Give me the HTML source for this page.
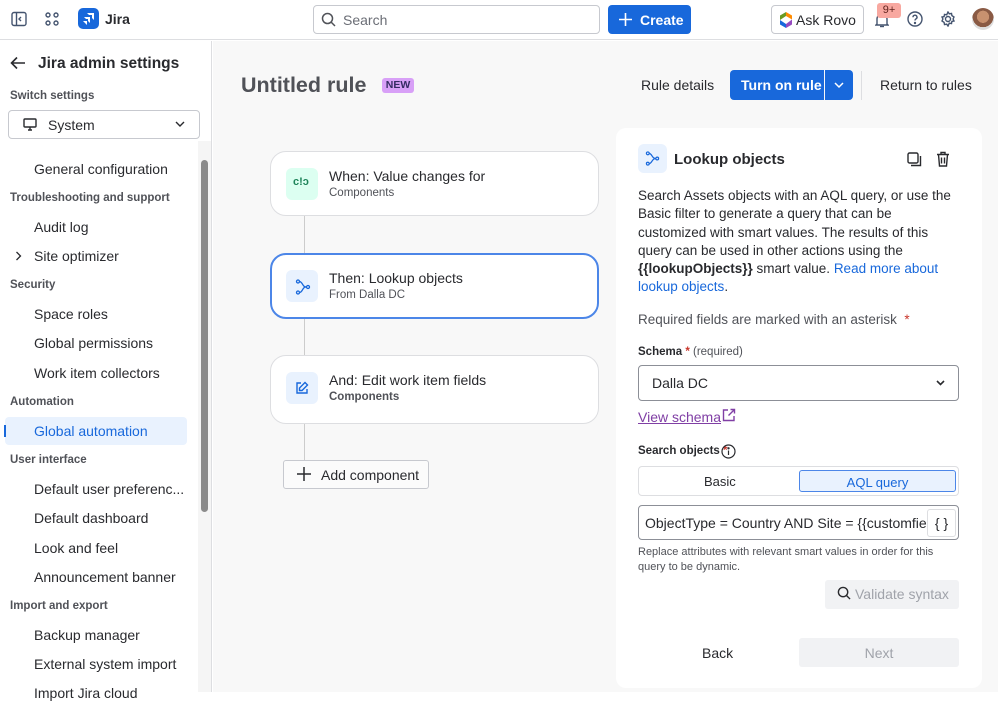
<!DOCTYPE html>
<html><head><meta charset="utf-8"><style>
*{box-sizing:border-box;margin:0;padding:0}
body{width:998px;height:692px;overflow:hidden;font-family:"Liberation Sans",sans-serif;color:#292a2e;background:#fff;position:relative;font-size:14px}
.a{position:absolute}
.top{left:0;top:0;width:998px;height:40px;border-bottom:1px solid #dddee1;background:#fff}
.side{left:0;top:41px;width:212px;height:651px;border-right:1px solid #dddee1;background:#fff}
.main{left:213px;top:41px;width:785px;height:651px;background:#f8f8f8;overflow:hidden}
.sec{font-size:11.5px;font-weight:bold;color:#505258;left:10px}
.it{font-size:14px;color:#292a2e;left:34px}
.card{background:#fff;border:1px solid #dddee1;border-radius:16px}
.ic{width:32px;height:32px;border-radius:6px;left:15px;top:16px}
.t1{left:58px;top:16px;font-size:14px}
.t2{left:58px;top:35px;font-size:11.5px;color:#505258}
</style></head><body>
<div class="a top">
 <svg class="a" style="left:11px;top:11px" width="16" height="16" viewBox="0 0 16 16" fill="none" stroke="#44546f" stroke-width="1.4"><rect x="1" y="1.5" width="14" height="13" rx="2"/><line x1="5.5" y1="1.5" x2="5.5" y2="14.5"/><path d="M10 6l-2 2 2 2"/></svg>
 <svg class="a" style="left:45px;top:12px" width="14" height="14" viewBox="0 0 14 14" fill="none" stroke="#44546f" stroke-width="1.4"><circle cx="3" cy="3" r="2"/><circle cx="11" cy="3" r="2"/><circle cx="3" cy="11" r="2"/><circle cx="11" cy="11" r="2"/></svg>
 <div class="a" style="left:78px;top:8px;width:21px;height:21px;border-radius:5px;background:#1868db"></div>
 <svg class="a" style="left:81px;top:11px" width="15" height="15" viewBox="0 0 15 15" fill="#fff"><path d="M6 2h7v7l-2-2V4H8z"/><path d="M3 6h6v6l-2-2V8H5z"/><path d="M2 10h4v4z"/></svg>
 <div class="a" style="left:105px;top:11px;font-size:14px;font-weight:bold">Jira</div>
 <div class="a" style="left:313px;top:5px;width:287px;height:29px;border:1px solid #c7c9cf;border-radius:4px"></div>
 <svg class="a" style="left:321px;top:12px" width="15" height="15" viewBox="0 0 15 15" fill="none" stroke="#505258" stroke-width="1.5"><circle cx="6.5" cy="6.5" r="5"/><line x1="10" y1="10" x2="14" y2="14"/></svg>
 <div class="a" style="left:343px;top:12px;font-size:14px;color:#6b6e76">Search</div>
 <div class="a" style="left:608px;top:5px;width:83px;height:29px;background:#1868db;border-radius:4px"></div>
 <svg class="a" style="left:619px;top:13px" width="13" height="13" viewBox="0 0 13 13" stroke="#fff" stroke-width="1.6"><path d="M6.5 0v13M0 6.5h13"/></svg>
 <div class="a" style="left:640px;top:12px;color:#fff;font-size:14px;font-weight:bold">Create</div>
 <div class="a" style="left:771px;top:5px;width:93px;height:29px;border:1px solid #c7c9cf;border-radius:4px;font-size:14px;padding:6px 0 0 24px">Ask Rovo</div>
 <svg class="a" style="left:779px;top:12px" width="14" height="16" viewBox="0 0 14 16"><path d="M7 0l6 3.5v4L7 4z" fill="#ff8b00"/><path d="M1 3.5L7 0v4L1 8z" fill="#6a9a23"/><path d="M1 8v4.5L7 16v-4z" fill="#1868db"/><path d="M13 7.5v5L7 16v-4z" fill="#964ac0"/></svg>
 <svg class="a" style="left:875px;top:12px" width="14" height="16" viewBox="0 0 14 16" fill="none" stroke="#44546f" stroke-width="1.4"><path d="M2 12V7a5 5 0 0110 0v5l1 1H1z"/><path d="M5 14.5h4"/></svg>
 <div class="a" style="left:877px;top:3px;width:24px;height:15px;background:#f8a8a0;border-radius:3px;font-size:11px;text-align:center;padding-top:1px;color:#5d1f1a">9+</div>
 <svg class="a" style="left:907px;top:11px" width="16" height="16" viewBox="0 0 16 16" fill="none" stroke="#44546f" stroke-width="1.4"><circle cx="8" cy="8" r="7"/><path d="M6 6.2a2 2 0 113 1.7c-.7.4-1 .8-1 1.6"/><circle cx="8" cy="12" r=".5" fill="#44546f"/></svg>
 <svg class="a" style="left:940px;top:11px" width="16" height="16" viewBox="0 0 16 16" fill="none" stroke="#44546f" stroke-width="1.4"><circle cx="8" cy="8" r="2.5"/><path d="M8 1l1.3 1.8 2.2-.4.4 2.2L14 6l-.9 2 .9 2-2.1.4-.4 2.2-2.2-.4L8 15l-1.3-1.8-2.2.4-.4-2.2L2 10l.9-2L2 6l2.1-.4.4-2.2 2.2.4z"/></svg>
 <div class="a" style="left:972px;top:8px;width:22px;height:22px;border-radius:50%;background:radial-gradient(circle at 50% 40%,#c8916f 0 35%,#8a5a44 36% 60%,#ddd 61%)"></div>
</div>

<div class="a side">
 <svg class="a" style="left:10px;top:15px" width="16" height="14" viewBox="0 0 16 14" fill="none" stroke="#292a2e" stroke-width="1.6"><path d="M15 7H2M7 1.5L1.5 7 7 12.5"/></svg>
 <div class="a" style="left:38px;top:14px;font-size:15.5px;font-weight:bold">Jira admin settings</div>
 <div class="a sec" style="top:49px">Switch settings</div>
 <div class="a" style="left:8px;top:69px;width:192px;height:29px;border:1px solid #c7c9cf;border-radius:4px"></div>
 <svg class="a" style="left:23px;top:77px" width="14" height="13" viewBox="0 0 14 13" fill="none" stroke="#292a2e" stroke-width="1.4"><rect x="1" y="1" width="12" height="8" rx="1"/><path d="M5 12h4M7 9v3"/></svg>
 <div class="a" style="left:48px;top:76px;font-size:14px">System</div>
 <svg class="a" style="left:175px;top:80px" width="10" height="7" viewBox="0 0 10 7" fill="none" stroke="#292a2e" stroke-width="1.4"><path d="M1 1l4 4 4-4"/></svg>
 <div class="a it" style="top:120px">General configuration</div>
 <div class="a sec" style="top:151px">Troubleshooting and support</div>
 <div class="a it" style="top:178px">Audit log</div>
 <svg class="a" style="left:15px;top:210px" width="7" height="10" viewBox="0 0 7 10" fill="none" stroke="#292a2e" stroke-width="1.3"><path d="M1.5 1l4 4-4 4"/></svg>
 <div class="a it" style="top:207px">Site optimizer</div>
 <div class="a sec" style="top:238px">Security</div>
 <div class="a it" style="top:265px">Space roles</div>
 <div class="a it" style="top:294px">Global permissions</div>
 <div class="a it" style="top:324px">Work item collectors</div>
 <div class="a sec" style="top:355px">Automation</div>
 <div class="a" style="left:5px;top:376px;width:182px;height:28px;background:#e9f2fe;border-radius:4px"></div>
 <div class="a" style="left:4px;top:384px;width:2px;height:12px;background:#1868db"></div>
 <div class="a it" style="top:382px;color:#1868db">Global automation</div>
 <div class="a sec" style="top:413px">User interface</div>
 <div class="a it" style="top:440px">Default user preferenc...</div>
 <div class="a it" style="top:469px">Default dashboard</div>
 <div class="a it" style="top:499px">Look and feel</div>
 <div class="a it" style="top:528px">Announcement banner</div>
 <div class="a sec" style="top:559px">Import and export</div>
 <div class="a it" style="top:586px">Backup manager</div>
 <div class="a it" style="top:615px">External system import</div>
 <div class="a it" style="top:644px">Import Jira cloud</div>
 <div class="a" style="left:198px;top:100px;width:13px;height:551px;background:#f5f5f5"></div>
 <div class="a" style="left:201px;top:119px;width:7px;height:352px;background:#8b8b8b;border-radius:4px"></div>
</div>

<div class="a main">
 <div class="a" style="left:28px;top:32px;font-size:21.5px;font-weight:bold;color:#505258">Untitled rule</div>
 <div class="a" style="left:169px;top:37px;width:32px;height:15px;background:#d8a0f7;border-radius:3px;font-size:10.5px;font-weight:bold;text-align:center;padding-top:1px;color:#352c63">NEW</div>
 <div class="a" style="left:428px;top:36px;font-size:14px">Rule details</div>
 <div class="a" style="left:517px;top:29px;width:94px;height:30px;background:#1868db;border-radius:4px 0 0 4px;color:#fff;font-weight:bold;font-size:14px;padding:7px 0 0 11px">Turn on rule</div>
 <div class="a" style="left:612px;top:29px;width:28px;height:30px;background:#1868db;border-radius:0 4px 4px 0"></div>
 <svg class="a" style="left:621px;top:41px" width="10" height="7" viewBox="0 0 10 7" fill="none" stroke="#fff" stroke-width="1.5"><path d="M1 1l4 4 4-4"/></svg>
 <div class="a" style="left:648px;top:30px;width:1px;height:29px;background:#dddee1"></div>
 <div class="a" style="left:667px;top:36px;font-size:14px">Return to rules</div>

 <div class="a" style="left:91px;top:174px;width:1px;height:250px;background:#ccc"></div>
 <div class="a card" style="left:57px;top:110px;width:329px;height:65px">
  <div class="a ic" style="background:#dcfff1"></div>
  <div class="a" style="left:22px;top:24px;font-size:11px;font-weight:bold;color:#1f845a">c!ɔ</div>
  <div class="a t1">When: Value changes for</div><div class="a t2">Components</div>
 </div>
 <div class="a card" style="left:57px;top:212px;width:329px;height:66px;border:2px solid #4c86e8">
  <div class="a ic" style="background:#e9f2fe;left:14px;top:15px"></div>
  <svg class="a" style="left:23px;top:24px" width="16" height="16" viewBox="0 0 16 16" fill="none" stroke="#1868db" stroke-width="1.3"><circle cx="3" cy="2.5" r="1.5"/><circle cx="3" cy="13.5" r="1.5"/><circle cx="13" cy="8" r="1.5"/><path d="M4.5 2.5C8 3 7 8 11.5 8M4.5 13.5C8 13 7 8 11.5 8"/></svg>
  <div class="a t1" style="left:57px;top:15px">Then: Lookup objects</div><div class="a t2" style="left:57px;top:34px">From Dalla DC</div>
 </div>
 <div class="a card" style="left:57px;top:314px;width:329px;height:69px">
  <div class="a ic" style="background:#e9f2fe"></div>
  <svg class="a" style="left:24px;top:25px" width="14" height="14" viewBox="0 0 14 14" fill="none" stroke="#1868db" stroke-width="1.4"><path d="M6 2H2v10h10V8"/><path d="M10 1.5l2.5 2.5L7 9.5H4.5V7z"/></svg>
  <div class="a t1">And: Edit work item fields</div><div class="a t2" style="font-weight:bold">Components</div>
 </div>
 <div class="a" style="left:70px;top:419px;width:146px;height:29px;border:1px solid #c7c9cf;border-radius:3px;background:#fbfbfb;font-size:14px;padding:6px 0 0 37px;color:#292a2e">Add component</div>
 <svg class="a" style="left:84px;top:426px" width="14" height="14" viewBox="0 0 14 14" stroke="#292a2e" stroke-width="1.5"><path d="M7 0v14M0 7h14"/></svg>

 <div class="a" style="left:403px;top:87px;width:366px;height:560px;background:#fff;border-radius:10px">
  <div class="a" style="left:22px;top:16px;width:29px;height:29px;background:#e9f2fe;border-radius:6px"></div>
  <svg class="a" style="left:29px;top:23px" width="15" height="15" viewBox="0 0 16 16" fill="none" stroke="#1868db" stroke-width="1.3"><circle cx="3" cy="2.5" r="1.5"/><circle cx="3" cy="13.5" r="1.5"/><circle cx="13" cy="8" r="1.5"/><path d="M4.5 2.5C8 3 7 8 11.5 8M4.5 13.5C8 13 7 8 11.5 8"/></svg>
  <div class="a" style="left:58px;top:23px;font-size:15px;font-weight:bold">Lookup objects</div>
  <svg class="a" style="left:291px;top:24px" width="15" height="15" viewBox="0 0 15 15" fill="none" stroke="#292a2e" stroke-width="1.4"><rect x="1" y="1" width="10" height="10" rx="1.5"/><path d="M13.5 4v9.5H4"/></svg>
  <svg class="a" style="left:320px;top:23px" width="14" height="16" viewBox="0 0 14 16" fill="none" stroke="#292a2e" stroke-width="1.4"><path d="M1 3.5h12M5 3.5V1.5h4v2M2.5 3.5l1 11.5h7l1-11.5M5.5 6.5v6M8.5 6.5v6"/></svg>
  <div class="a" style="left:22px;top:59px;width:320px;font-size:13.5px;line-height:18.3px">Search Assets objects with an AQL query, or use the Basic filter to generate a query that can be customized with smart values. The results of this query can be used in other actions using the <b>{{lookupObjects}}</b> smart value. <span style="color:#1868db">Read more about lookup objects</span>.</div>
  <div class="a" style="left:22px;top:184px;font-size:13.5px;color:#505258">Required fields are marked with an asterisk <span style="color:#c9372c">&nbsp;*</span></div>
  <div class="a" style="left:22px;top:218px;font-size:11.5px;font-weight:bold;color:#292a2e">Schema <span style="color:#c9372c">*</span> <span style="font-weight:normal;color:#505258">(required)</span></div>
  <div class="a" style="left:22px;top:237px;width:321px;height:36px;border:1px solid #8c8f97;border-radius:4px;font-size:14px;padding:9px 0 0 13px">Dalla DC</div>
  <svg class="a" style="left:320px;top:252px" width="9" height="6" viewBox="0 0 9 6" fill="none" stroke="#292a2e" stroke-width="1.6"><path d="M1 1l3.5 3.5L8 1"/></svg>
  <div class="a" style="left:22px;top:281px;font-size:14px;color:#803fa5;text-decoration:underline">View schema</div>
  <svg class="a" style="left:106px;top:280px" width="14" height="14" viewBox="0 0 14 14" fill="none" stroke="#803fa5" stroke-width="1.4"><path d="M6 2H1.5v10.5H12V8M8.5 1.5H12.5V5.5M12.5 1.5L6.5 7.5"/></svg>
  <div class="a" style="left:22px;top:317px;font-size:11.5px;font-weight:bold;color:#292a2e">Search objects <span style="color:#c9372c">*</span></div>
  <svg class="a" style="left:105px;top:316px" width="15" height="15" viewBox="0 0 15 15" fill="none" stroke="#292a2e" stroke-width="1.2"><circle cx="7.5" cy="7.5" r="6.5"/><path d="M7.5 6.5v4.5"/><circle cx="7.5" cy="4.3" r=".6" fill="#292a2e"/></svg>
  <div class="a" style="left:22px;top:338px;width:321px;height:30px;border:1px solid #dddee1;border-radius:4px"></div>
  <div class="a" style="left:88px;top:346px;font-size:13px">Basic</div>
  <div class="a" style="left:183px;top:342px;width:157px;height:22px;border:1px solid #4c86e8;background:#e9f2fe;border-radius:3px;color:#1868db;font-size:13px;text-align:center;padding-top:4px">AQL query</div>
  <div class="a" style="left:22px;top:377px;width:321px;height:35px;border:1px solid #8c8f97;border-radius:4px;font-size:14px;padding:9px 0 0 6px;white-space:nowrap;overflow:hidden">ObjectType = Country AND Site = {{customfie</div>
  <div class="a" style="left:311px;top:381px;width:29px;height:28px;border:1px solid #dddee1;border-radius:3px;background:#fff;font-size:14px;text-align:center;padding-top:5px">{ }</div>
  <div class="a" style="left:22px;top:417px;width:310px;font-size:11px;line-height:15px;color:#505258">Replace attributes with relevant smart values in order for this query to be dynamic.</div>
  <div class="a" style="left:209px;top:452px;width:134px;height:29px;background:#f1f2f4;border-radius:3px;font-size:14px;color:#a0a3aa;padding:6px 0 0 30px">Validate syntax</div>
  <svg class="a" style="left:221px;top:458px" width="14" height="14" viewBox="0 0 15 15" fill="none" stroke="#292a2e" stroke-width="1.5"><circle cx="6.5" cy="6.5" r="5"/><line x1="10" y1="10" x2="14" y2="14"/></svg>
  <div class="a" style="left:86px;top:517px;font-size:14px">Back</div>
  <div class="a" style="left:183px;top:510px;width:160px;height:29px;background:#f1f2f4;border-radius:3px;font-size:14px;color:#a0a3aa;text-align:center;padding-top:7px">Next</div>
 </div>
</div>
</body></html>
